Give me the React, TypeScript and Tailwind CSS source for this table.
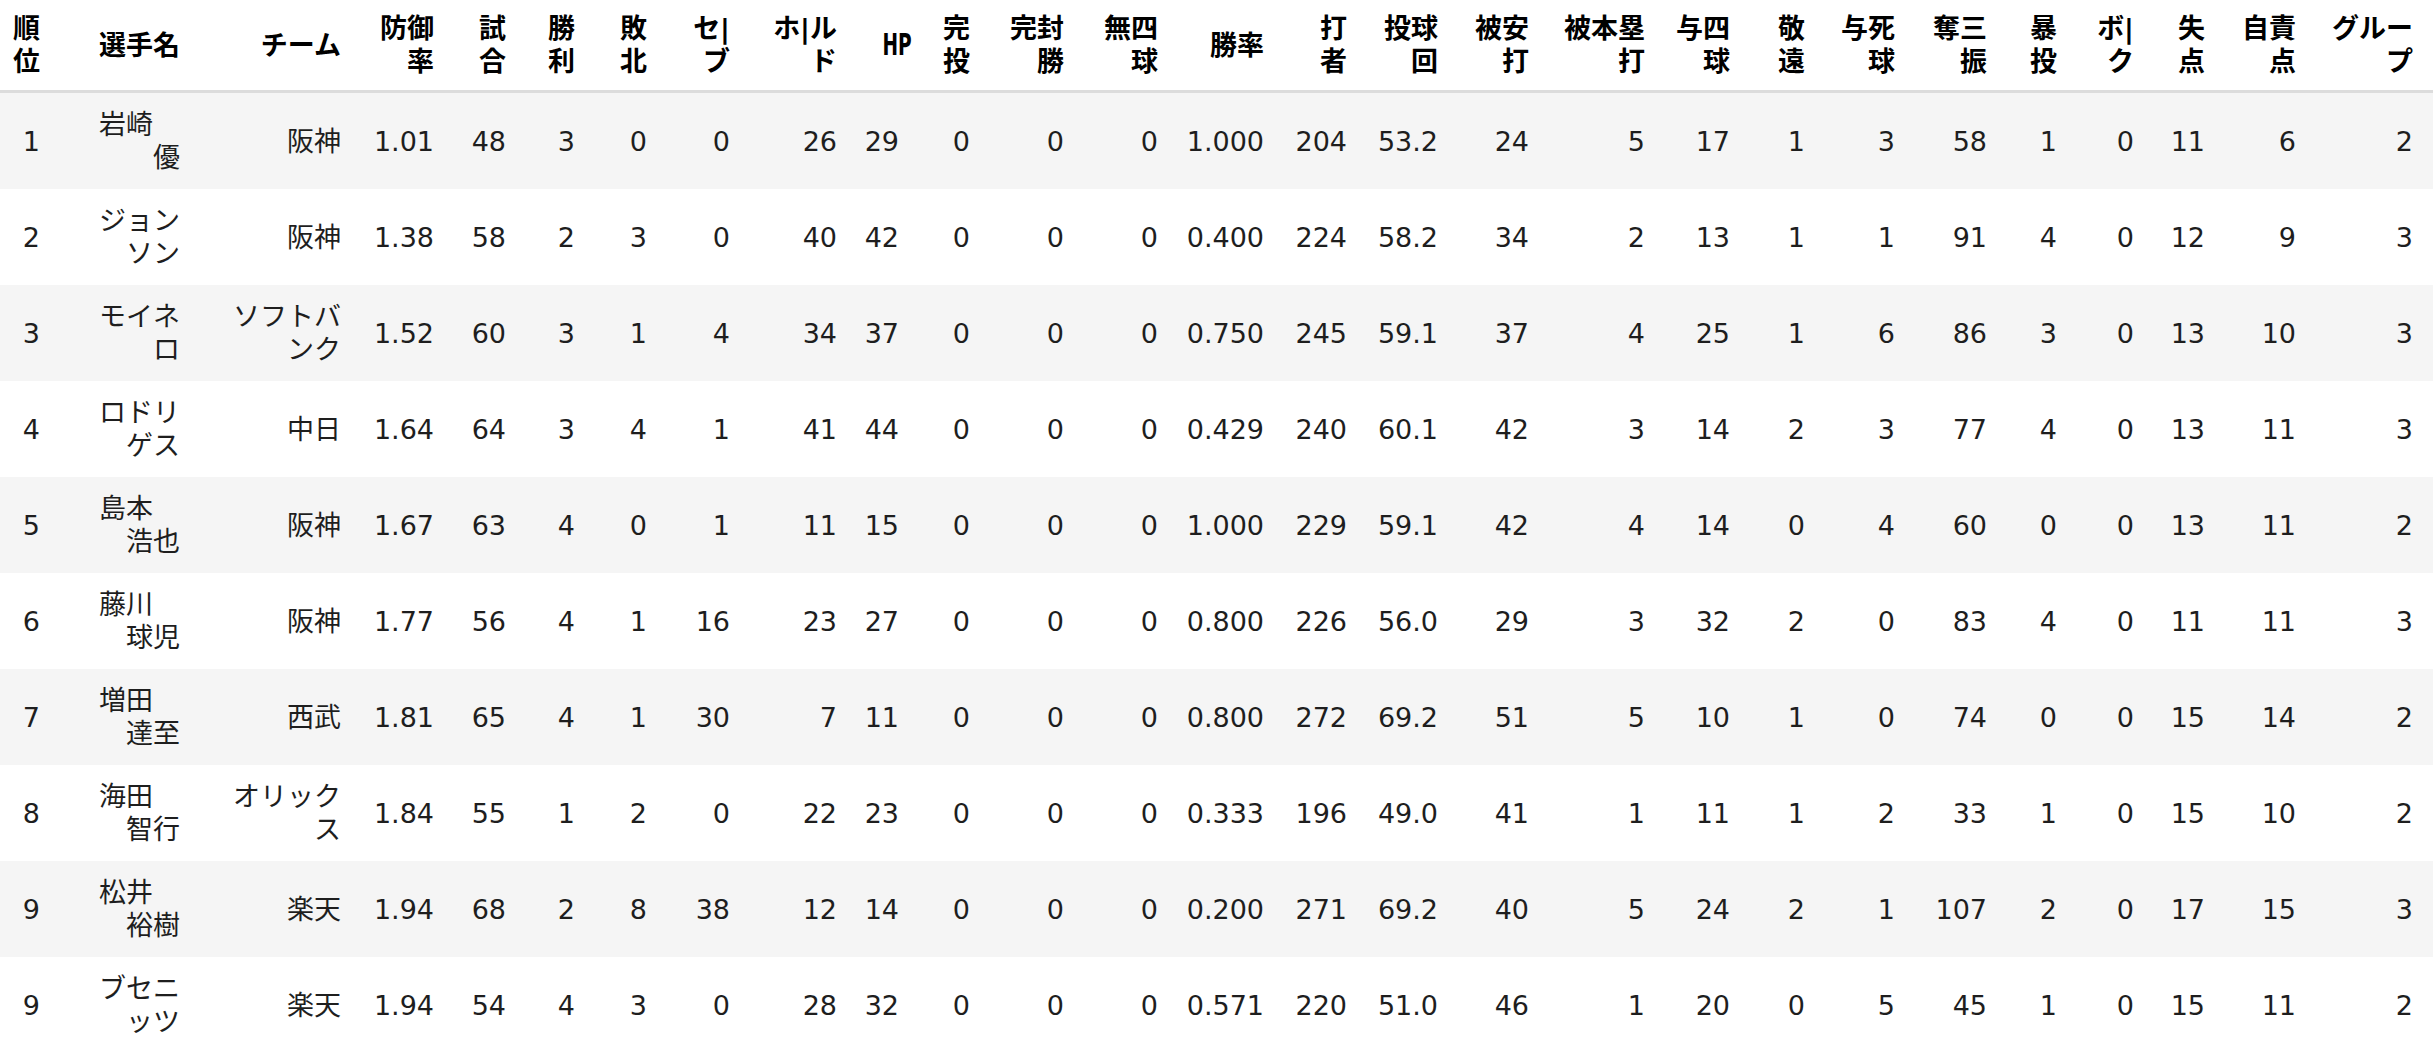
import React from 'react'

// column widths in px, measured off the reference (right edges + cell padding)
const colWidths = [
  'w-[53px]', 'w-[140px]', 'w-[161px]', 'w-[93px]', 'w-[72px]', 'w-[69px]', 'w-[72px]',
  'w-[83px]', 'w-[107px]', 'w-[62px]', 'w-[71px]', 'w-[94px]', 'w-[94px]', 'w-[106px]',
  'w-[83px]', 'w-[91px]', 'w-[91px]', 'w-[116px]', 'w-[85px]', 'w-[75px]', 'w-[90px]',
  'w-[92px]', 'w-[70px]', 'w-[77px]', 'w-[71px]', 'w-[91px]', 'w-[124px]',
]

const headers = [
  '順\n位', '選手名', 'チーム', '防御\n率', '試\n合', '勝\n利', '敗\n北', 'セ|\nブ', 'ホ|ル\nド', 'HP',
  '完\n投', '完封\n勝', '無四\n球', '勝率', '打\n者', '投球\n回', '被安\n打', '被本塁\n打', '与四\n球',
  '敬\n遠', '与死\n球', '奪三\n振', '暴\n投', 'ボ|\nク', '失\n点', '自責\n点', 'グルー\nプ',
]

type Row = (string | number)[]

const rows: Row[] = [
  [1, '岩崎　\n優', '阪神', '1.01', 48, 3, 0, 0, 26, 29, 0, 0, 0, '1.000', 204, '53.2', 24, 5, 17, 1, 3, 58, 1, 0, 11, 6, 2],
  [2, 'ジョン\nソン', '阪神', '1.38', 58, 2, 3, 0, 40, 42, 0, 0, 0, '0.400', 224, '58.2', 34, 2, 13, 1, 1, 91, 4, 0, 12, 9, 3],
  [3, 'モイネ\nロ', 'ソフトバ\nンク', '1.52', 60, 3, 1, 4, 34, 37, 0, 0, 0, '0.750', 245, '59.1', 37, 4, 25, 1, 6, 86, 3, 0, 13, 10, 3],
  [4, 'ロドリ\nゲス', '中日', '1.64', 64, 3, 4, 1, 41, 44, 0, 0, 0, '0.429', 240, '60.1', 42, 3, 14, 2, 3, 77, 4, 0, 13, 11, 3],
  [5, '島本　\n浩也', '阪神', '1.67', 63, 4, 0, 1, 11, 15, 0, 0, 0, '1.000', 229, '59.1', 42, 4, 14, 0, 4, 60, 0, 0, 13, 11, 2],
  [6, '藤川　\n球児', '阪神', '1.77', 56, 4, 1, 16, 23, 27, 0, 0, 0, '0.800', 226, '56.0', 29, 3, 32, 2, 0, 83, 4, 0, 11, 11, 3],
  [7, '増田　\n達至', '西武', '1.81', 65, 4, 1, 30, 7, 11, 0, 0, 0, '0.800', 272, '69.2', 51, 5, 10, 1, 0, 74, 0, 0, 15, 14, 2],
  [8, '海田　\n智行', 'オリック\nス', '1.84', 55, 1, 2, 0, 22, 23, 0, 0, 0, '0.333', 196, '49.0', 41, 1, 11, 1, 2, 33, 1, 0, 15, 10, 2],
  [9, '松井　\n裕樹', '楽天', '1.94', 68, 2, 8, 38, 12, 14, 0, 0, 0, '0.200', 271, '69.2', 40, 5, 24, 2, 1, 107, 2, 0, 17, 15, 3],
  [9, 'ブセニ\nッツ', '楽天', '1.94', 54, 4, 3, 0, 28, 32, 0, 0, 0, '0.571', 220, '51.0', 46, 1, 20, 0, 5, 45, 1, 0, 15, 11, 2],
]

export default function App() {
  return (
    <div className="min-h-screen bg-white font-['DejaVu_Sans','Noto_Sans_CJK_JP',sans-serif] text-[27px]">
      <table className="w-[2433px] table-fixed border-collapse">
        <colgroup>
          {colWidths.map((w, i) => <col key={i} className={w} />)}
        </colgroup>
        <thead>
          <tr>
            {headers.map((h, i) => (
              <th
                key={i}
                className={`${i === 26 ? 'pr-[20px]' : 'pr-[13px]'} pl-[13px] py-[12px] text-right align-middle font-bold leading-[33px] whitespace-pre text-black border-b-[3px] border-[#dcdcdc]`}
              >
                {h === 'HP'
                  ? <span className="inline-block origin-right scale-x-[0.6] text-[31px]">HP</span>
                  : h}
              </th>
            ))}
          </tr>
        </thead>
        <tbody>
          {rows.map((r, ri) => (
            <tr key={ri} className={ri % 2 === 0 ? 'bg-[#f5f5f5]' : 'bg-white'}>
              {r.map((c, ci) => (
                <td
                  key={ci}
                  className={`${ci === 26 ? 'pr-[20px]' : 'pr-[13px]'} pl-[13px] py-[15px] text-right align-middle leading-[33px] whitespace-pre text-[#1e1e1e]`}
                >
                  {c}
                </td>
              ))}
            </tr>
          ))}
        </tbody>
      </table>
    </div>
  )
}
